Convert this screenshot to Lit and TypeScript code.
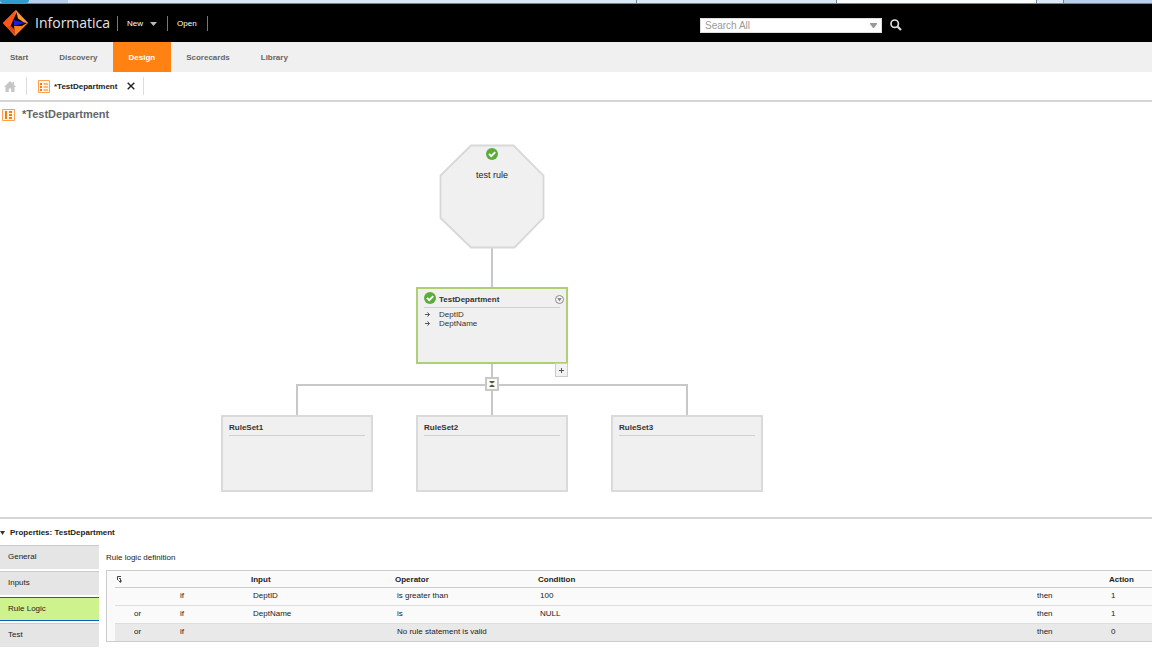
import { LitElement, html, css, svg } from "lit";
import { customElement, property, state } from "lit/decorators.js";
import { classMap } from "lit/directives/class-map.js";

const check = svg`<circle cx="6" cy="6" r="6" fill="#5bac3c"/><path d="M3 5.8 5.3 8.2 9.2 4.2" fill="none" stroke="#fff" stroke-width="1.9"/>`;

@customElement("diagram-node")
class DiagramNode extends LitElement {
  @property() name = "";
  @property({ type: Array }) inputs: string[] = [];
  @property({ type: Boolean, reflect: true }) selected = false;

  static styles = css`
    :host {
      display: block;
      box-sizing: border-box;
      width: 152px;
      height: 77px;
      padding: 0 6px;
      background: #f0f0f0;
      border: 2px solid #dadada;
      color: #333;
      font: 8px/9px "Liberation Sans", Arial, sans-serif;
    }
    :host([selected]) { border-color: #acd073; }
    .head {
      display: flex;
      align-items: center;
      height: 18px;
      border-bottom: 1px solid #d0d0d0;
    }
    h2 { flex: 1; margin: 0; padding-top: 3px; font-size: 8px; white-space: nowrap; }
    :host([selected]) h2 { padding-left: 3px; }
    svg { display: block; flex: none; }
    .menu { margin-right: -4px; padding: 2px 0 0; border: 0; background: none; }
    ul { margin: 0; padding: 2px 0 0 1px; list-style: none; font-size: 8px; }
    li { display: flex; align-items: center; gap: 9px; }
  `;

  render() {
    return html`
      <div class="head">
        ${this.selected ? html`<svg width="12" height="12" viewBox="0 0 12 12">${check}</svg>` : ""}
        <h2>${this.name}</h2>
        ${this.selected
          ? html`<button class="menu" aria-label="Node menu">
              <svg width="9" height="9" viewBox="0 0 9 9"><circle cx="4.5" cy="4.5" r="4" fill="#f4f4f4" stroke="#8a8a8a"/><path d="M2.200 3h4.600L4.500 6.500z" fill="#888"/></svg>
            </button>`
          : ""}
      </div>
      ${this.inputs.length
        ? html`<ul>${this.inputs.map((i) => html`<li>
            <svg width="5" height="5" viewBox="0 0 5 5"><path d="M0 2.5h4.5M2.4.4 4.5 2.5 2.4 4.6" fill="none" stroke="#555"/></svg>${i}</li>`)}</ul>`
        : ""}
    `;
  }
}

@customElement("app-root")
class AppRoot extends LitElement {
  @state() tab = "Rule Logic";

  nav = ["Start", "Discovery", "Design", "Scorecards", "Library"];
  tabs = ["General", "Inputs", "Rule Logic", "Test"];
  rules = [
    ["", "DeptID", "is greater than", "100", "1"],
    ["or", "DeptName", "is", "NULL", "1"],
    ["or", "", "No rule statement is valid", "", "0"],
  ];

  static styles = css`
    :host {
      display: block;
      min-height: 100vh;
      overflow: hidden;
      background: #fff;
      color: #222;
      font: 8px/12px "Liberation Sans", Arial, sans-serif;
    }
    * { box-sizing: border-box; }
    button, input { font: inherit; color: inherit; }
    button { border: 0; padding: 0; background: none; cursor: pointer; }
    a { color: inherit; text-decoration: none; }
    svg { display: block; flex: none; }

    .strip { display: flex; height: 4px; background: #b9d0ea; border-bottom: 1px solid #71839b; }
    .strip span { border-right: 1px solid #71839b; background: #dce9f7; }
    .strip .corner { width: 29px; border: 0; border-radius: 0 0 8px 8px; background: #319bce; }
    .strip .gap { width: 39px; border: 0; background: #b9d0ea; }
    .strip .address { width: 569px; }
    .strip .page { width: 200px; }
    .strip .active { background: #fbfcfe; }
    .strip .new { width: 27px; }

    header { display: flex; align-items: center; height: 38px; background: #000; color: #fff; }
    .brand { display: flex; align-items: center; gap: 6px; width: 117px; padding-left: 2px; }
    .brand span { font: 14px/20px "Open Sans", "Noto Sans", sans-serif; color: #e4e4e4; }
    .menus { display: flex; flex: 0 0 583px; }
    .menus button { display: flex; align-items: center; gap: 7px; height: 15px; padding: 1px 10px 0 9px; border-left: 1px solid #777; }
    .menus button:last-child { border-right: 1px solid #777; }
    .search { display: flex; align-items: center; width: 182px; height: 15px; margin-top: 4px; padding-right: 4px; background: #fff; border: 1px solid #ddd; }
    .search input { flex: 1; min-width: 0; height: 13px; padding: 0 4px; border: 0; outline: 0; background: none; font-size: 10px; }
    .search input::placeholder { color: #999; opacity: 1; }
    .go { margin: 4px 0 0 8px; }

    nav { display: flex; height: 30px; background: #f0f0f0; color: #666; font-weight: bold; line-height: 31px; }
    nav a { padding: 0 16px 0 15px; }
    nav a:first-child { padding-left: 10px; }
    nav a.on { background: #ff8213; color: #fff; }

    .docs { display: flex; align-items: center; height: 30px; border-bottom: 2px solid #d5d5d5; font-weight: bold; }
    .home { width: 27px; padding-left: 4px; border-right: 1px solid #ddd; height: 18px; display: flex; align-items: center; }
    .doc { display: flex; align-items: center; gap: 4px; height: 18px; padding: 0 8px 0 11px; border-right: 1px solid #ddd; }
    .doc button { margin-left: 6px; }
    .doc span { padding-top: 1px; }

    .title { display: flex; align-items: center; gap: 7px; height: 25px; padding-left: 2px; }
    h1 { margin: 0; padding-bottom: 1px; font-size: 11px; color: #666; }

    .canvas { position: relative; height: 390px; }
    .wires, .start, .plus, .fold, diagram-node { position: absolute; }
    .wires { left: 0; top: 0; }
    .start { left: 440px; top: 21px; width: 104px; display: flex; flex-direction: column; align-items: center; gap: 9px; font-size: 9px; }
    .plus { left: 555px; top: 236px; width: 13px; height: 14px; border: 1px solid #ccc; background: #f2f2f2; display: grid; place-items: center; }
    .fold { left: 485px; top: 250px; width: 14px; height: 14px; border: 2px solid #c8c8c8; background: #fbfbef; display: grid; place-items: center; }
    .n0 { left: 416px; top: 160px; }
    .n1 { left: 221px; top: 288px; }
    .n2 { left: 416px; top: 288px; }
    .n3 { left: 611px; top: 288px; }

    .props { border-top: 2px solid #d5d5d5; }
    .props h2 { display: flex; align-items: center; gap: 5px; height: 26px; margin: 0; padding-top: 1px; font-size: 8px; }
    .body { display: flex; align-items: flex-start; }
    .side { display: flex; flex-direction: column; gap: 2px; flex: 0 0 99px; }
    .side button { height: 24px; padding: 0 8px 1px; background: #e5e5e5; border-top: 1px solid #ccc; text-align: left; }
    .side button.on { background: #cef38e; border-top-color: #0b5fc4; border-bottom: 1px solid #0b5fc4; }
    .logic { flex: 1; min-width: 0; padding-left: 7px; }
    .logic p { height: 25px; margin: 0; line-height: 25px; }
    .grid { padding-left: 8px; border: 1px solid #ccc; border-right: 0; background: #fafafa; }
    table { width: 100%; border-collapse: collapse; table-layout: fixed; }
    th, td { height: 18px; padding: 0 0 0 2px; text-align: left; white-space: nowrap; border-bottom: 1px solid #ddd; }
    th { height: 16px; padding: 2px 0 0; border-bottom-color: #ccc; }
    th:first-child { padding-left: 1px; }
    tr:last-child td { background: #e9e9e9; border-bottom: 0; }
    td.join { padding-left: 19px; }
    .c-join { width: 63px; }
    .c-if { width: 73px; }
    .c-in { width: 144px; }
    .c-op { width: 143px; }
    .c-then { width: 74px; }
    .c-act { width: 43px; }
  `;

  render() {
    return html`
      <div class="strip">
        <span class="corner"></span><span class="gap"></span><span class="address"></span>
        <span class="page"></span><span class="page active"></span><span class="new"></span>
      </div>
      <header>
        <div class="brand">
          <svg width="27" height="28" viewBox="0 0 27 28">
            <path d="M14 1 1 14l12 13 13-13z" fill="#ff8420"/>
            <path d="M14 1 1 14l5 5 6-9z" fill="#ff5414"/>
            <path d="M1 14 13 27l1-5-8-5z" fill="#e8641c"/>
            <path d="M14.500 3.500 8 18l5 3 12-7-4-3z" fill="#0a0605"/>
            <path d="M14.500 3 26 14l-4-.5-6-4z" fill="#ff9a34"/>
            <path d="M12 11 23 14 12 17z" fill="#1b1be8"/>
            <path d="M12 17h8l-7 8z" fill="#f8801c"/>
            <path d="M9 17 13 21 13 26 5 18z" fill="#d8481a"/>
          </svg>
          <span>Informatica</span>
        </div>
        <div class="menus">
          <button>New <svg width="7" height="4" viewBox="0 0 7 4"><path d="M0 0h7L3.500 4z" fill="#bbb"/></svg></button>
          <button>Open</button>
        </div>
        <div class="search">
          <input type="text" placeholder="Search All" aria-label="Search All" />
          <button aria-label="Search scope"><svg width="7" height="5" viewBox="0 0 7 5"><path d="M0 0h7v1L4 5H3L0 1z" fill="#999"/></svg></button>
        </div>
        <button class="go" aria-label="Search">
          <svg width="12" height="12" viewBox="0 0 12 12"><circle cx="4.700" cy="4.700" r="3.700" fill="none" stroke="#ddd" stroke-width="1.700"/><path d="M7.500 7.500 11 11" stroke="#ddd" stroke-width="2.200"/></svg>
        </button>
      </header>
      <nav>${this.nav.map((n) => html`<a href="#" class=${classMap({ on: n === "Design" })}>${n}</a>`)}</nav>
      <div class="docs">
        <a class="home" href="#" aria-label="Home">
          <svg width="12" height="11" viewBox="0 0 12 11"><path d="M6 0 0 6h1.500v5h3.300V7.500h2.400V11h3.300V6H12L10 4V1H8.500v1.500z" fill="#c6c6c6"/></svg>
        </a>
        <div class="doc">
          <svg width="12" height="13" viewBox="0 0 12 13"><path d="M.5.5h11v12H.5z" fill="#fff7ee" stroke="#ffa04c"/><path d="M2 3h2v2H2zM2 6h2v2H2zM2 9h2v2H2zM5.500 3.500H10v1H5.500zM5.500 6.500H10v1H5.500zM5.500 9.500H10v1H5.500z" fill="#f57c10"/></svg>
          <span>*TestDepartment</span>
          <button aria-label="Close"><svg width="8" height="8" viewBox="0 0 8 8"><path d="M.7.7 7.300 7.300M7.300.7.7 7.300" stroke="#222" stroke-width="1.400"/></svg></button>
        </div>
      </div>
      <div class="title">
        <svg width="13" height="12" viewBox="0 0 13 12"><path d="M.5.500h12v11H.5z" fill="#fff7ee" stroke="#ffa04c"/><path d="M3 2h2v8H3zM7 2h3v2H7zM7 5h3v2H7zM7 8h3v2H7z" fill="#f57c10"/></svg>
        <h1>*TestDepartment</h1>
      </div>
      <main class="canvas">
        <svg class="wires" width="780" height="380" viewBox="0 0 780 380" fill="none" stroke="#c8c8c8" stroke-width="2">
          <path d="M492 121v40M492 236v53M297 289v-31h390v31"/>
          <path d="M471 18.500h42.500l30 30v42.500l-29 29.500h-43.500l-30.500-29.500V48.500z" fill="#f0f0f0" stroke="#d8d8d8" stroke-width="1.800"/>
        </svg>
        <div class="start">
          <svg width="12" height="12" viewBox="0 0 12 12">${check}</svg>
          <span>test rule</span>
        </div>
        <diagram-node class="n0" name="TestDepartment" selected .inputs=${["DeptID", "DeptName"]}></diagram-node>
        <button class="plus" aria-label="Add"><svg width="5" height="5" viewBox="0 0 5 5"><path d="M2.500 0v5M0 2.500h5" stroke="#555"/></svg></button>
        <button class="fold" aria-label="Collapse"><svg width="6" height="6" viewBox="0 0 6 6"><path d="M.5 0h5v1L3.500 2.200h-1L.5 1zM.5 6h5V5L3.500 3.800h-1L.5 5z" fill="#555"/></svg></button>
        ${[1, 2, 3].map((i) => html`<diagram-node class="n${i}" name="RuleSet${i}"></diagram-node>`)}
      </main>
      <section class="props">
        <h2><svg width="5" height="4" viewBox="0 0 5 4"><path d="M0 0h5L2.500 4z" fill="#333"/></svg>Properties: TestDepartment</h2>
        <div class="body">
          <div class="side" role="tablist">
            ${this.tabs.map((t) => html`<button role="tab" aria-selected=${t === this.tab} class=${classMap({ on: t === this.tab })} @click=${() => (this.tab = t)}>${t}</button>`)}
          </div>
          <div class="logic">
            <p>Rule logic definition</p>
            <div class="grid">
              <table>
                <colgroup><col class="c-join" /><col class="c-if" /><col class="c-in" /><col class="c-op" /><col /><col class="c-then" /><col class="c-act" /></colgroup>
                <thead><tr>
                  <th><svg width="6" height="7" viewBox="0 0 6 7"><path d="M5 .5H1.500V4M3 2.500h1.500V6M2.500 4.500 4.500 6.500 5.500 4.500" fill="none" stroke="#444"/></svg></th>
                  <th></th><th>Input</th><th>Operator</th><th>Condition</th><th></th><th>Action</th>
                </tr></thead>
                <tbody>
                  ${this.rules.map(([j, i, o, c, a]) => html`<tr>
                    <td class="join">${j}</td><td>if</td><td>${i}</td><td>${o}</td><td>${c}</td><td>then</td><td>${a}</td>
                  </tr>`)}
                </tbody>
              </table>
            </div>
          </div>
        </div>
      </section>
    `;
  }
}
